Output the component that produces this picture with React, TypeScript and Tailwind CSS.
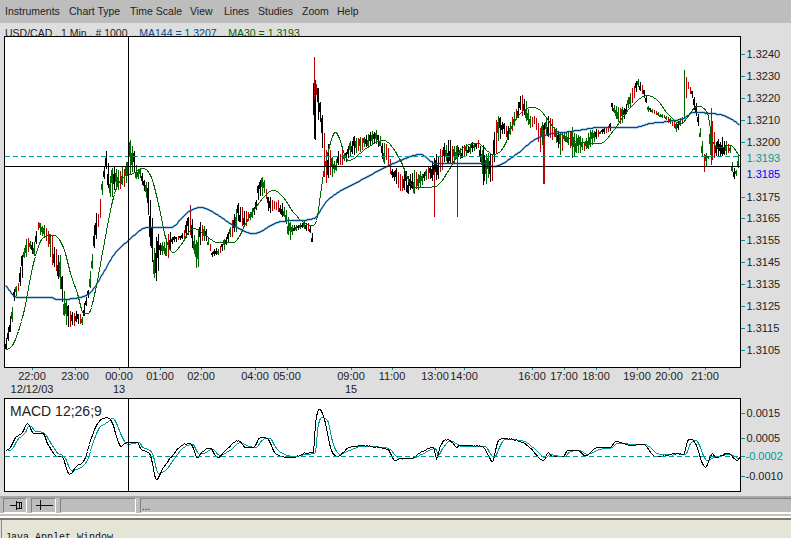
import React from 'react';

type Pt = [number, number];

const MENU: [string, string][] = [
  ['Instruments', 'w-[64px]'],
  ['Chart Type', 'w-[61px]'],
  ['Time Scale', 'w-[60px]'],
  ['View', 'w-[34px]'],
  ['Lines', 'w-[34px]'],
  ['Studies', 'w-[44px]'],
  ['Zoom', 'w-[35px]'],
  ['Help', 'w-[30px]'],
];

// [x, high, low] envelope of the candles, in page pixels
const BANDS: [number, number, number][] = [
  [6, 338, 350], [8, 325, 342], [12, 305, 325], [13, 290, 305], [18, 283, 292], [22, 247, 283], [24, 245, 260],
  [27, 227, 260], [30, 240, 250], [34, 240, 260], [38, 220, 232], [46, 225, 245], [52, 235, 268], [55, 248, 270],
  [60, 250, 290], [63, 285, 310], [65, 295, 330], [67, 300, 335], [70, 310, 332], [75, 310, 325], [82, 315, 327],
  [85, 295, 315], [88, 290, 300], [90, 270, 290], [92, 250, 270], [95, 210, 245], [98, 213, 230], [100, 195, 220],
  [103, 165, 190], [106, 150, 172], [110, 170, 205], [115, 165, 195], [120, 170, 190], [125, 160, 190], [130, 140, 180],
  [133, 145, 175], [137, 165, 185], [140, 168, 180], [145, 180, 195], [148, 180, 220], [150, 190, 250], [153, 230, 275],
  [155, 250, 285], [157, 220, 280], [160, 240, 260], [165, 240, 255], [168, 225, 260], [172, 235, 245], [180, 235, 240],
  [185, 225, 240], [190, 200, 240], [195, 240, 265], [197, 230, 280], [200, 220, 250], [205, 225, 240], [212, 250, 258],
  [220, 245, 255], [225, 235, 250], [230, 225, 240], [235, 210, 235], [238, 200, 225], [245, 208, 228], [250, 210, 220],
  [255, 205, 215], [258, 180, 205], [261, 172, 200], [265, 180, 195], [268, 195, 215], [275, 198, 212], [285, 205, 220],
  [290, 220, 245], [293, 225, 232], [305, 220, 230], [310, 225, 235], [312, 232, 242], [314, 57, 140], [316, 80, 100],
  [318, 85, 120], [321, 105, 130], [324, 125, 185], [326, 150, 185], [328, 140, 180], [334, 160, 175], [338, 150, 170],
  [346, 150, 162], [350, 140, 160], [355, 135, 155], [365, 135, 150], [375, 128, 145], [380, 135, 150], [383, 140, 170],
  [387, 140, 165], [392, 165, 182], [400, 170, 195], [415, 170, 195], [425, 170, 183], [438, 150, 180], [445, 140, 165],
  [450, 140, 165], [460, 145, 160], [470, 143, 155], [478, 140, 150], [483, 145, 185], [492, 155, 183], [495, 120, 155],
  [498, 110, 150], [503, 120, 135], [508, 125, 140], [515, 110, 125], [520, 92, 115], [525, 95, 120], [530, 115, 130],
  [535, 115, 125], [540, 125, 155], [546, 115, 135], [550, 115, 145], [555, 125, 140], [560, 130, 160], [565, 130, 140],
  [572, 125, 160], [575, 130, 160], [585, 140, 152], [590, 128, 148], [600, 130, 135], [610, 123, 132], [612, 102, 112],
  [620, 105, 127], [625, 105, 118], [630, 90, 108], [638, 77, 90], [645, 90, 100], [648, 105, 112], [655, 110, 115],
  [665, 115, 120], [670, 118, 125], [677, 120, 133], [682, 115, 125], [684, 70, 118], [688, 80, 90], [692, 90, 100],
  [697, 105, 125], [700, 125, 140], [704, 150, 178], [708, 155, 160], [711, 108, 165], [715, 140, 160], [722, 135, 160],
  [730, 145, 155], [733, 165, 181], [736, 170, 177], [738, 150, 170],
];

const SPIKES: [number, number, number, string][] = [
  [434, 170, 217, '#c00000'],
  [457, 145, 217, '#c00000'],
  [543, 130, 184, '#c00000'],
  [544, 130, 184, '#c00000'],
  [314, 57, 100, '#c00000'],
  [315, 80, 140, '#000000'],
  [684, 70, 118, '#006600'],
  [711, 108, 165, '#006600'],
  [483, 145, 185, '#000000'],
];

const MA144: Pt[] = [
  [5, 285], [17, 297], [50, 297], [57, 299], [73, 298], [90, 292], [103, 272], [113, 255], [128, 240], [147, 227],
  [170, 227], [187, 212], [200, 207], [213, 212], [233, 225], [253, 233], [277, 222], [313, 218], [327, 200],
  [360, 180], [373, 173], [400, 160], [420, 154], [435, 163], [457, 163], [483, 163], [493, 166], [517, 153],
  [533, 140], [547, 134], [563, 132], [577, 130], [600, 127], [617, 127], [633, 127], [650, 123], [667, 121],
  [683, 118], [693, 112], [710, 113], [723, 115], [733, 120], [740, 125],
];

const MA30: Pt[] = [
  [5, 350], [13, 343], [23, 313], [33, 263], [43, 237], [53, 235], [63, 247], [70, 273], [77, 293], [83, 313],
  [88, 313], [95, 290], [103, 247], [113, 197], [120, 180], [133, 173], [143, 168], [152, 180], [160, 213],
  [165, 237], [173, 252], [180, 245], [193, 228], [203, 233], [217, 242], [233, 242], [247, 220], [263, 197],
  [273, 190], [283, 197], [293, 212], [310, 225], [315, 223], [322, 180], [325, 163], [335, 132], [348, 160],
  [367, 147], [383, 140], [400, 160], [410, 183], [420, 187], [435, 186], [450, 167], [460, 150], [477, 143],
  [493, 154], [503, 147], [513, 123], [530, 107], [540, 110], [553, 127], [573, 140], [600, 143], [613, 130],
  [630, 107], [647, 95], [657, 100], [667, 113], [680, 123], [697, 106], [707, 113], [713, 143], [720, 147],
  [730, 145], [740, 157],
];

const MACD: Pt[] = [
  [5, 451], [10, 447], [15, 437], [22, 432], [27, 423], [33, 433], [42, 433], [48, 445], [55, 455], [62, 457],
  [69, 474], [75, 467], [85, 457], [90, 440], [96, 425], [105, 417], [110, 419], [121, 446], [125, 443], [137, 442],
  [140, 448], [150, 455], [156, 479], [163, 467], [172, 455], [180, 446], [190, 443], [197, 457], [202, 451],
  [210, 448], [217, 457], [227, 448], [238, 440], [245, 447], [253, 447], [260, 437], [267, 438], [275, 453],
  [293, 457], [303, 453], [313, 452], [315, 423], [319, 409], [325, 423], [330, 447], [337, 456], [347, 448],
  [360, 445], [377, 447], [387, 449], [395, 460], [400, 458], [410, 458], [420, 452], [433, 447], [436, 458],
  [440, 445], [448, 439], [457, 447], [458, 445], [482, 446], [492, 461], [497, 442], [502, 438], [522, 442],
  [530, 448], [543, 460], [548, 452], [552, 456], [563, 456], [567, 450], [577, 450], [585, 455], [597, 447],
  [610, 447], [615, 441], [630, 445], [643, 444], [655, 456], [670, 454], [673, 453], [683, 454], [688, 439],
  [693, 440], [705, 467], [712, 453], [715, 457], [728, 453], [737, 460], [740, 455],
];

const SIGNAL: Pt[] = MACD.map(([x, y], i): Pt => {
  const prev = MACD[Math.max(i - 1, 0)][1];
  const lag = y < 420 ? 0.6 : 0.25;
  return [Math.min(x + 2, 740), y + (prev - y) * lag];
});

const PRICES: [string, number][] = [
  ['1.3240', 54], ['1.3230', 76], ['1.3220', 98], ['1.3210', 120], ['1.3200', 142], ['1.3175', 197],
  ['1.3165', 218], ['1.3155', 240], ['1.3145', 262], ['1.3135', 284], ['1.3125', 306], ['1.3115', 328], ['1.3105', 350],
];

const TIMES: [string, number][] = [
  ['22:00', 32], ['23:00', 75], ['00:00', 119], ['01:00', 160], ['02:00', 201], ['04:00', 255], ['05:00', 287],
  ['09:00', 351], ['11:00', 392], ['13:00', 435], ['14:00', 464], ['16:00', 532], ['17:00', 564], ['18:00', 596],
  ['19:00', 637], ['20:00', 669], ['21:00', 705],
];

const makeRand = (start: number) => {
  let seed = start;
  return () => {
    seed = (seed * 16807) % 2147483647;
    return seed / 2147483647;
  };
};

// monotone hermite through the hand-read points, snapped to whole pixels like the applet's lines
function curve(pts: Pt[], jitter = 0): string {
  const rand = makeRand(77);
  const delta = (i: number) => (pts[i + 1][1] - pts[i][1]) / (pts[i + 1][0] - pts[i][0]);
  const slope = (i: number) => {
    if (i === 0) return delta(0);
    if (i === pts.length - 1) return delta(i - 1);
    const d0 = delta(i - 1);
    const d1 = delta(i);
    if (d0 * d1 <= 0) return 0;
    const m = (d0 + d1) / 2;
    return Math.sign(m) * Math.min(Math.abs(m), 3 * Math.abs(d0), 3 * Math.abs(d1));
  };
  const out: string[] = [];
  for (let i = 0; i < pts.length - 1; i++) {
    const [x0, y0] = pts[i];
    const [x1, y1] = pts[i + 1];
    const dx = x1 - x0;
    const m0 = slope(i) * dx;
    const m1 = slope(i + 1) * dx;
    for (let k = 0; k < dx; k++) {
      const t = k / dx;
      const t2 = t * t;
      const t3 = t2 * t;
      const y =
        (2 * t3 - 3 * t2 + 1) * y0 + (t3 - 2 * t2 + t) * m0 + (-2 * t3 + 3 * t2) * y1 + (t3 - t2) * m1;
      out.push(`${x0 + k + 0.5},${Math.round(y + (rand() - 0.5) * jitter) + 0.5}`);
    }
  }
  return out.join(' ');
}

function buildCandles() {
  const rand = makeRand(1234);
  const bars: { x: number; y: number; w: number; h: number; c: string }[] = [];
  for (let x = 6; x < 739; x += 2) {
    const i = BANDS.findIndex((b) => b[0] >= x);
    if (i < 0) break;
    const b = BANDS[i];
    const a = BANDS[Math.max(i - 1, 0)];
    const t = b[0] === a[0] ? 1 : (x - a[0]) / (b[0] - a[0]);
    const hi = a[1] + (b[1] - a[1]) * t;
    const lo = a[2] + (b[2] - a[2]) * t;
    const span = lo - hi;
    const top = Math.round(hi + rand() * span * 0.25);
    const bottom = Math.round(lo - rand() * span * 0.25);
    const r = rand();
    const c = r < 0.42 ? '#000000' : r < 0.66 ? '#c00000' : '#006600';
    bars.push({ x, y: top, w: 1, h: Math.max(bottom - top, 1), c });
    const body = Math.max(2, Math.round((bottom - top) * 0.45));
    const room = Math.max(bottom - top - body, 0);
    bars.push({ x: c === '#c00000' ? x : x - 1, y: top + Math.round(rand() * room), w: c === '#c00000' ? 1 : 2, h: body, c });
  }
  return bars;
}

const CANDLES = buildCandles();
const MA144_LINE = curve(MA144);
const MA30_LINE = curve(MA30);
const MACD_LINE = curve(MACD, 1);
const SIGNAL_LINE = curve(SIGNAL);

const SUNKEN = 'border border-t-[#808080] border-l-[#808080] border-r-white border-b-white';

export default function App() {
  return (
    <div className="flex h-[538px] w-[791px] flex-col overflow-hidden bg-[#dedede] font-['Liberation_Sans',sans-serif] text-[#222]">
      <nav className="flex h-[23px] items-center bg-[#bdbdbd] pl-[5px] text-[10.5px]">
        {MENU.map(([label, width]) => (
          <span key={label} className={width}>
            {label}
          </span>
        ))}
      </nav>

      <div className="h-[13px] whitespace-pre pl-[5px] pt-[4px] text-[10.5px] leading-[13px]">
        <span>USD/CAD , 1 Min , # 1000</span>
        <span className="text-[#004b8d]">  , MA144 = 1.3207</span>
        <span className="text-[#006600]">  , MA30 = 1.3193</span>
      </div>

      <div className="relative flex h-[332px] pl-[4px]">
        <div className="h-[332px] w-[737px] border border-black bg-white">
          <svg width={735} height={330} viewBox="5 37 735 330" className="block">
            <g shapeRendering="crispEdges">
              {CANDLES.map((b, i) => (
                <rect key={i} x={b.x} y={b.y} width={b.w} height={b.h} fill={b.c} />
              ))}
              {SPIKES.map(([x, top, bottom, c], i) => (
                <rect key={i} x={x} y={top} width={1} height={bottom - top} fill={c} />
              ))}
            </g>
            <polyline points={MA144_LINE} fill="none" stroke="#004b8d" strokeWidth={1.3} />
            <g shapeRendering="crispEdges">
              <polyline points={MA30_LINE} fill="none" stroke="#006600" strokeWidth={1} />
              <line x1={5} x2={740} y1={156.5} y2={156.5} stroke="#009999" strokeDasharray="5 3" />
              <line x1={5} x2={740} y1={166.5} y2={166.5} stroke="#000" />
              <line x1={128.5} x2={128.5} y1={37} y2={367} stroke="#000" />
            </g>
          </svg>
        </div>
        <svg width={50} height={332} viewBox="741 36 50 332" className="block" fontSize={11} fill="#222">
          {PRICES.map(([label, y]) => (
            <g key={label}>
              <line x1={741} x2={745} y1={y + 0.5} y2={y + 0.5} stroke="#009999" shapeRendering="crispEdges" />
              <text x={746.5} y={y + 4}>{label}</text>
            </g>
          ))}
          <text x={746.5} y={162} fill="#009999">1.3193</text>
          <text x={746.5} y={178} fill="#0000ff">1.3185</text>
        </svg>
      </div>

      <svg width={791} height={30} viewBox="0 368 791 30" className="block" fontSize={11} fill="#222">
        {TIMES.map(([label, x]) => (
          <g key={label}>
            <line x1={x + 0.5} x2={x + 0.5} y1={368} y2={370} stroke="#009999" shapeRendering="crispEdges" />
            <text x={x} y={380} textAnchor="middle">{label}</text>
          </g>
        ))}
        <text x={32} y={393} textAnchor="middle">12/12/03</text>
        <text x={119} y={393} textAnchor="middle">13</text>
        <text x={351} y={393} textAnchor="middle">15</text>
      </svg>

      <div className="flex h-[94px] pl-[4px]">
        <div className="relative h-[94px] w-[737px] border border-black bg-white">
          <svg width={735} height={92} viewBox="5 399 735 92" className="block">
            <g shapeRendering="crispEdges">
              <polyline points={SIGNAL_LINE} fill="none" stroke="#009999" strokeWidth={1} />
              <polyline points={MACD_LINE} fill="none" stroke="#000" strokeWidth={1} />
              <line x1={5} x2={740} y1={456.5} y2={456.5} stroke="#009999" strokeDasharray="5 3" />
              <line x1={128.5} x2={128.5} y1={399} y2={491} stroke="#000" />
            </g>
          </svg>
          <span className="absolute left-[5px] top-[4px] text-[14px] leading-[16px]">MACD 12;26;9</span>
        </div>
        <svg width={50} height={94} viewBox="741 398 50 94" className="block" fontSize={11} fill="#222">
          <line x1={741} x2={745} y1={413.5} y2={413.5} stroke="#009999" shapeRendering="crispEdges" />
          <text x={746.5} y={417}>0.0015</text>
          <line x1={741} x2={745} y1={438.5} y2={438.5} stroke="#009999" shapeRendering="crispEdges" />
          <text x={746.5} y={442}>0.0005</text>
          <line x1={741} x2={745} y1={456.5} y2={456.5} stroke="#009999" shapeRendering="crispEdges" />
          <text x={745.5} y={460} fill="#009999">-0.0002</text>
          <line x1={741} x2={745} y1={476.5} y2={476.5} stroke="#009999" shapeRendering="crispEdges" />
          <text x={745.5} y={480}>-0.0010</text>
        </svg>
      </div>

      <div className="mt-[4px] h-[2px] bg-[#a8a8a8]" />
      <div className="flex h-[15px] gap-[4px] bg-[#bdbdbd] pl-[3px]">
        <div className={`flex h-[15px] w-[24px] items-center pl-[5px] ${SUNKEN}`}>
          <svg width={14} height={11} viewBox="0 0 14 11">
            <path d="M1 5.5h6M7.5 1v9M8 2.5h4v6H8M10 3v5" fill="none" stroke="#111" strokeWidth={1} shapeRendering="crispEdges" />
          </svg>
        </div>
        <div className={`flex h-[15px] w-[25px] items-center pl-[4px] ${SUNKEN}`}>
          <svg width={17} height={11} viewBox="0 0 17 11">
            <path d="M0 5.5h17M4.5 0v10" fill="none" stroke="#111" strokeWidth={1} shapeRendering="crispEdges" />
          </svg>
        </div>
        <div className={`h-[15px] w-[76px] ${SUNKEN}`} />
        <div className="flex h-[15px] flex-1 items-end border-b border-l border-t border-b-white border-l-[#808080] border-t-[#808080] pl-[1px] text-[10px] leading-[11px]">
          ...
        </div>
      </div>

      <div className="h-[1px] bg-white" />
      <div className="h-[2px] bg-[#c8c0b8]" />
      <div className="h-[2px] bg-white" />
      <div className="h-[2px] bg-[#7a7a6e]" />
      <div className="ml-[1px] min-h-0 flex-1 border-l border-l-[#8a897d] bg-[#e4e5d6] pl-[3px] pt-[12px] font-['Liberation_Mono',monospace] text-[10px] leading-[12px] text-[#111]">
        Java Applet Window
      </div>
    </div>
  );
}
